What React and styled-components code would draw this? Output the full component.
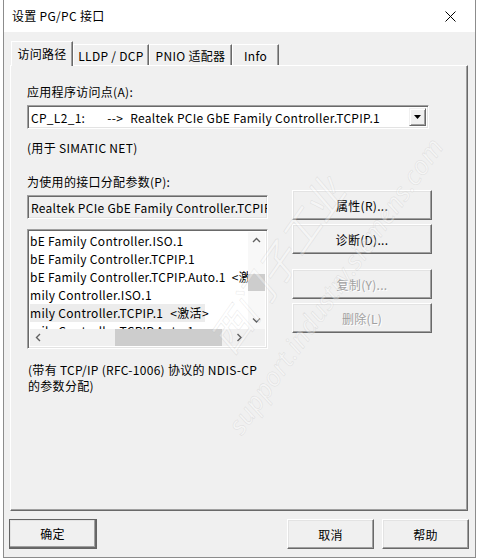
import React from "react";
import styled, { createGlobalStyle, css } from "styled-components";

const GlobalStyle = createGlobalStyle`
  html, body {
    margin: 0;
    padding: 0;
    background: #ffffff;
  }
  body {
    font-family: "Noto Sans CJK SC", "Noto Sans", sans-serif;
    font-size: 12px;
    letter-spacing: 0.3px;
    color: #000;
  }
`;

// window frame
const Window = styled.div`
  position: relative;
  margin-left: 3px;
  width: 473px;
  height: 558px;
  box-sizing: border-box;
  border-left: 1px solid #8c8c8c;
  border-right: 1px solid #8c8c8c;
  border-bottom: 1px solid #8c8c8c;
  background: #f0f0f0;
  overflow: hidden;
`;

const TitleBar = styled.div`
  height: 32px;
  background: #ffffff;
  display: flex;
  align-items: center;
  justify-content: space-between;
  padding-left: 8px;
  box-sizing: border-box;
`;

const Title = styled.span`
  font-size: 12px;
  line-height: 16px;
`;

const CloseBox = styled.div`
  width: 46px;
  height: 32px;
  display: flex;
  align-items: center;
  justify-content: center;
  margin-right: 2px;
`;

const Body = styled.div`
  padding-top: 9px;
`;

// tabs
const TabRow = styled.div`
  display: flex;
  align-items: flex-end;
  height: 24px;
  margin-left: 7px;
  position: relative;
  z-index: 1;
`;

const Tab = styled.div`
  box-sizing: border-box;
  width: ${(p) => p.$w}px;
  height: 21px;
  display: flex;
  align-items: center;
  justify-content: center;
  background: #f0f0f0;
  border-top: 1px solid #ffffff;
  border-left: 1px solid #ffffff;
  border-right: 1px solid #696969;
  box-shadow: inset -1px 0 #a0a0a0;
  line-height: 16px;
  padding-top: 1px;
  ${(p) =>
    p.$active &&
    css`
      height: 25px;
      margin-bottom: -1px;
      padding-bottom: 2px;
    `}
`;

const Panel = styled.div`
  position: relative;
  box-sizing: border-box;
  margin: 0 7px 0 6px;
  height: 446px;
  border-top: 1px solid #ffffff;
  border-left: 1px solid #ffffff;
  border-right: 1px solid #696969;
  border-bottom: 1px solid #696969;
  box-shadow: inset -1px -1px #a0a0a0;
  padding: 18px 0 0 16px;
`;

const Label = styled.div`
  line-height: 16px;
  height: 16px;
  white-space: nowrap;
  margin-top: ${(p) => p.$mt || 0}px;
`;

const Sunken = css`
  box-sizing: border-box;
  border-top: 1px solid #a0a0a0;
  border-left: 1px solid #a0a0a0;
  border-right: 1px solid #ffffff;
  border-bottom: 1px solid #ffffff;
  box-shadow: inset 1px 1px #696969, inset -1px -1px #e3e3e3;
`;

const Combo = styled.div`
  ${Sunken};
  margin-top: 5px;
  width: 402px;
  height: 24px;
  background: #ffffff;
  display: flex;
  align-items: stretch;
  padding: 2px;
`;

const ComboText = styled.div`
  flex: 1;
  display: flex;
  align-items: center;
  padding-left: 1px;
  white-space: pre;
  overflow: hidden;
`;

const Gap = styled.span`
  display: inline-block;
  width: ${(p) => p.$w}px;
`;

const DropButton = styled.div`
  width: 17px;
  box-sizing: border-box;
  background: #f0f0f0;
  border-top: 1px solid #f0f0f0;
  border-left: 1px solid #f0f0f0;
  border-right: 1px solid #696969;
  border-bottom: 1px solid #696969;
  box-shadow: inset 1px 1px #ffffff, inset -1px -1px #a0a0a0;
  display: flex;
  align-items: center;
  justify-content: center;
`;

const ParamRow = styled.div`
  display: flex;
  margin-top: 18px;
`;

const LeftCol = styled.div`
  width: 241px;
  display: flex;
  flex-direction: column;
`;

const RightCol = styled.div`
  margin-left: 24px;
  padding-top: 16px;
  display: flex;
  flex-direction: column;
`;

const Field = styled.div`
  ${Sunken};
  margin-top: 5px;
  height: 24px;
  background: #f0f0f0;
  padding: 2px 0 2px 3px;
  display: flex;
  align-items: center;
  white-space: pre;
  overflow: hidden;
`;

const ListBox = styled.div`
  ${Sunken};
  margin-top: 10px;
  height: 120px;
  background: #ffffff;
  padding: 2px;
  display: grid;
  grid-template-columns: 1fr 17px;
  grid-template-rows: 1fr 17px;
`;

const ListItems = styled.div`
  overflow: hidden;
`;

const Row = styled.div`
  height: 18px;
  line-height: 18px;
  white-space: pre;
  background: ${(p) => (p.$sel ? "#ececec" : "transparent")};
  width: ${(p) => (p.$sel ? "175px" : "auto")};
`;

const Tag = styled.span`
  margin-left: ${(p) => p.$ml}px;
`;

const VScroll = styled.div`
  background: #f8f8f8;
  display: flex;
  flex-direction: column;
  align-items: center;
`;

const HScroll = styled.div`
  background: #f0f0f0;
  display: flex;
  align-items: center;
`;

const Corner = styled.div`
  background: #f0f0f0;
`;

const ArrowBox = styled.div`
  width: 17px;
  height: 17px;
  display: flex;
  align-items: center;
  justify-content: center;
  flex: none;
`;

const VThumb = styled.div`
  margin-top: 25px;
  width: 17px;
  height: 17px;
  background: #cdcdcd;
`;

const HTrack = styled.div`
  flex: 1;
  height: 100%;
  display: flex;
  align-items: stretch;
`;

const HThumb = styled.div`
  margin-left: 68px;
  width: 107px;
  background: #cdcdcd;
`;

const Button = styled.button`
  box-sizing: border-box;
  width: ${(p) => p.$w || 140}px;
  height: 30px;
  margin-top: ${(p) => p.$mt || 0}px;
  padding: 0;
  background: #f0f0f0;
  font-family: inherit;
  font-size: 12px;
  letter-spacing: inherit;
  color: ${(p) => (p.disabled ? "#a0a0a0" : "#000")};
  text-shadow: ${(p) => (p.disabled ? "1px 1px #ffffff" : "none")};
  border-top: 1px solid #ffffff;
  border-left: 1px solid #ffffff;
  border-right: 1px solid #696969;
  border-bottom: 1px solid #696969;
  box-shadow: inset -1px -1px #a0a0a0, inset 1px 1px #e3e3e3;
  ${(p) =>
    p.$default &&
    css`
      outline: 1px solid #646464;
      outline-offset: -1px;
      border-width: 1px 2px 2px 1px;
    `}
`;

const Note = styled.div`
  margin-top: 13px;
  margin-left: 1px;
  line-height: 16px;
`;

const Footer = styled.div`
  display: flex;
  margin-top: 8px;
  padding: 0 6px 0 5px;
  gap: 8px;
`;

const Spacer = styled.div`
  flex: 1;
`;

const Watermark = styled.div`
  position: absolute;
  left: ${(p) => p.$x}px;
  top: ${(p) => p.$y}px;
  transform: rotate(-55deg);
  transform-origin: left top;
  white-space: nowrap;
  font-size: ${(p) => p.$size}px;
  font-family: "Noto Sans", "Noto Sans CJK SC", sans-serif;
  font-style: italic;
  color: rgba(255, 255, 255, 0.35);
  -webkit-text-stroke: 0.6px rgba(170, 170, 170, 0.25);
  pointer-events: none;
  z-index: 5;
`;

const CloseIcon = () => (
  <svg width="11" height="11" viewBox="0 0 11 11">
    <path d="M0.5 0.5 L10.5 10.5 M10.5 0.5 L0.5 10.5" stroke="#000" strokeWidth="1" />
  </svg>
);

const DownTriangle = () => (
  <svg width="7" height="4" viewBox="0 0 7 4">
    <path d="M0 0 H7 L3.5 4 Z" fill="#000" />
  </svg>
);

const Chevron = ({ dir }) => {
  const paths = {
    up: "M1 5 L4.5 1.5 L8 5",
    down: "M1 1.5 L4.5 5 L8 1.5",
    left: "M5 1 L1.5 4.5 L5 8",
    right: "M1.5 1 L5 4.5 L1.5 8",
  };
  const vertical = dir === "up" || dir === "down";
  return (
    <svg width={vertical ? 9 : 7} height={vertical ? 7 : 9} viewBox={vertical ? "0 0 9 7" : "0 0 7 9"}>
      <path d={paths[dir]} fill="none" stroke="#606060" strokeWidth="1.4" />
    </svg>
  );
};

const TABS = [
  { label: "访问路径", w: 62, active: true },
  { label: "LLDP / DCP", w: 76 },
  { label: "PNIO 适配器", w: 83 },
  { label: "Info", w: 47 },
];

export default function App() {
  return (
    <>
      <GlobalStyle />
      <Window>
        <TitleBar>
          <Title>设置 PG/PC 接口</Title>
          <CloseBox>
            <CloseIcon />
          </CloseBox>
        </TitleBar>
        <Body>
          <TabRow>
            {TABS.map((t) => (
              <Tab key={t.label} $w={t.w} $active={t.active}>
                {t.label}
              </Tab>
            ))}
          </TabRow>
          <Panel>
            <Label>应用程序访问点(A):</Label>
            <Combo>
              <ComboText>
                CP_L2_1:<Gap $w={22} />--&gt;<Gap $w={7} />Realtek PCIe GbE Family Controller.TCPIP.1
              </ComboText>
              <DropButton>
                <DownTriangle />
              </DropButton>
            </Combo>
            <Label $mt={11}>(用于 SIMATIC NET)</Label>
            <ParamRow>
              <LeftCol>
                <Label>为使用的接口分配参数(P):</Label>
                <Field>Realtek PCIe GbE Family Controller.TCPIP.1</Field>
                <ListBox>
                  <ListItems>
                    <Row>bE Family Controller.ISO.1</Row>
                    <Row>bE Family Controller.TCPIP.1</Row>
                    <Row>
                      bE Family Controller.TCPIP.Auto.1<Tag $ml={6}>&lt;激活&gt;</Tag>
                    </Row>
                    <Row>mily Controller.ISO.1</Row>
                    <Row $sel>
                      mily Controller.TCPIP.1<Tag $ml={7}>&lt;激活&gt;</Tag>
                    </Row>
                    <Row>mily Controller.TCPIP.Auto.1</Row>
                  </ListItems>
                  <VScroll>
                    <ArrowBox>
                      <Chevron dir="up" />
                    </ArrowBox>
                    <VThumb />
                    <Spacer />
                    <ArrowBox>
                      <Chevron dir="down" />
                    </ArrowBox>
                  </VScroll>
                  <HScroll>
                    <ArrowBox>
                      <Chevron dir="left" />
                    </ArrowBox>
                    <HTrack>
                      <HThumb />
                    </HTrack>
                    <ArrowBox>
                      <Chevron dir="right" />
                    </ArrowBox>
                  </HScroll>
                  <Corner />
                </ListBox>
              </LeftCol>
              <RightCol>
                <Button>属性(R)...</Button>
                <Button $mt={4}>诊断(D)...</Button>
                <Button $mt={15} disabled>
                  复制(Y)...
                </Button>
                <Button $mt={4} disabled>
                  删除(L)
                </Button>
              </RightCol>
            </ParamRow>
            <Note>
              (带有 TCP/IP (RFC-1006) 协议的 NDIS-CP
              <br />
              的参数分配)
            </Note>
          </Panel>
          <Footer>
            <Button $w={88} $default>
              确定
            </Button>
            <Spacer />
            <Button $w={87}>取消</Button>
            <Button $w={87}>帮助</Button>
          </Footer>
        </Body>
        <Watermark $x={190} $y={330} $size={40}>
          西门子工业
        </Watermark>
        <Watermark $x={215} $y={420} $size={26}>
          support.industry.siemens.com
        </Watermark>
      </Window>
    </>
  );
}
